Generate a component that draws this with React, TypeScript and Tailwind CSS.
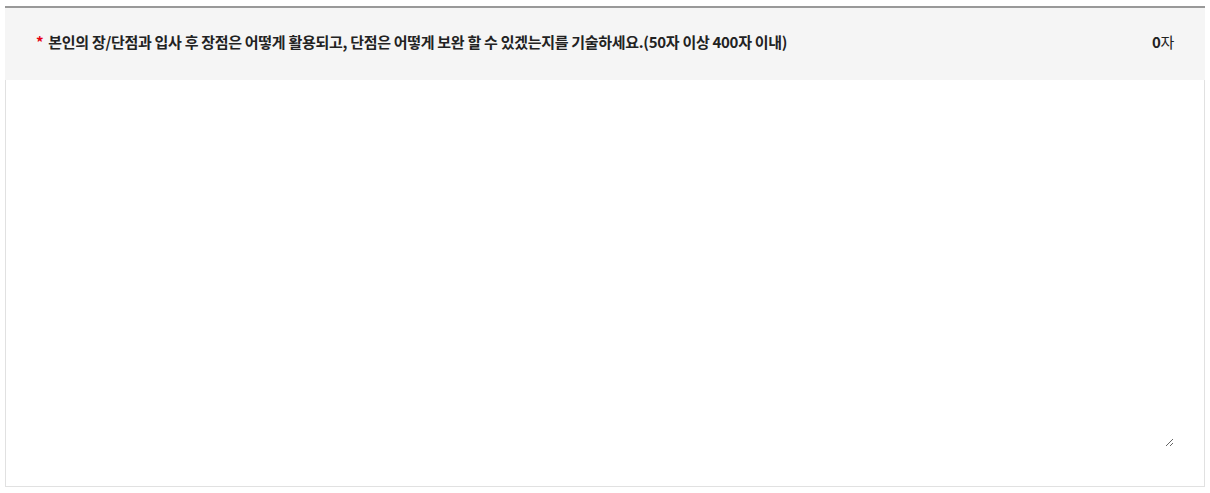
import React, { useState } from 'react';

const App: React.FC = () => {
  const [text, setText] = useState('');

  return (
    <div className="w-full bg-white pt-[6px] px-[5px]" style={{ fontFamily: '"Noto Sans CJK KR", "Noto Sans", sans-serif' }}>
      <div className="border-t-2 border-[#999999]">
        {/* 문항 헤더 */}
        <div className="h-[72px] bg-[#f5f5f5] flex items-center justify-between pl-[31px] pr-[31px] pb-[4px]">
          <p className="text-[15px] font-bold text-[#222] tracking-[-0.3px]">
            <span className="text-[#e60012] mr-[5px]">*</span>
            본인의 장/단점과 입사 후 장점은 어떻게 활용되고, 단점은 어떻게 보완 할 수 있겠는지를 기술하세요.(50자 이상 400자 이내)
          </p>
          <span className="text-[15px] text-[#222] tracking-[-0.3px]">
            <b>{text.length}</b>자
          </span>
        </div>

        {/* 입력 영역 */}
        <div className="border border-t-0 border-[#e1e1e1] px-[30px] pt-[20px] pb-[39px]">
          <textarea
            value={text}
            onChange={(e) => setText(e.target.value)}
            className="block w-full h-[347px] border-0 outline-none bg-transparent text-[15px] text-[#333]"
          />
        </div>
      </div>
    </div>
  );
};

export default App;
